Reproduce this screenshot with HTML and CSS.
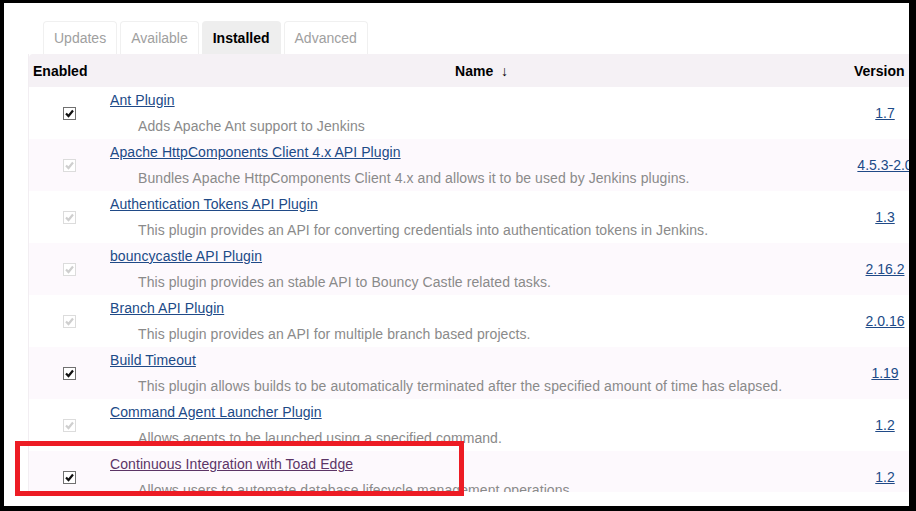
FILE: index.html
```html
<!DOCTYPE html>
<html lang="en">
<head>
    <meta charset="UTF-8">
    <title>Plugin Manager</title>
    <link rel="stylesheet" href="styles.css">
</head>
<body>

<div class="window">
    <div class="viewport">

        <!-- Onglets du gestionnaire -->
        <div class="tabs">
            <div class="tab">Updates</div>
            <div class="tab">Available</div>
            <div class="tab active">Installed</div>
            <div class="tab">Advanced</div>
        </div>

        <!-- Liste des plugins installés -->
        <table class="plugins">
            <colgroup>
                <col class="col-enabled">
                <col class="col-name">
                <col class="col-version">
            </colgroup>
            <thead>
                <tr>
                    <th class="th-enabled">Enabled</th>
                    <th class="th-name">Name&nbsp;&nbsp;↓</th>
                    <th class="th-version">Version</th>
                </tr>
            </thead>
            <tbody>
                <tr>
                    <td class="cell-check"><span class="check"><svg viewBox="0 0 11 11"><path d="M2 5.5 L4.5 8 L9 2.5"/></svg></span></td>
                    <td class="cell-name"><div class="title"><a href="#">Ant Plugin</a></div><div class="desc">Adds Apache Ant support to Jenkins</div></td>
                    <td class="cell-version"><a href="#">1.7</a></td>
                </tr>
                <tr>
                    <td class="cell-check"><span class="check off"><svg viewBox="0 0 11 11"><path d="M2 5.5 L4.5 8 L9 2.5"/></svg></span></td>
                    <td class="cell-name"><div class="title"><a href="#">Apache HttpComponents Client 4.x API Plugin</a></div><div class="desc">Bundles Apache HttpComponents Client 4.x and allows it to be used by Jenkins plugins.</div></td>
                    <td class="cell-version"><a href="#">4.5.3-2.0</a></td>
                </tr>
                <tr>
                    <td class="cell-check"><span class="check off"><svg viewBox="0 0 11 11"><path d="M2 5.5 L4.5 8 L9 2.5"/></svg></span></td>
                    <td class="cell-name"><div class="title"><a href="#">Authentication Tokens API Plugin</a></div><div class="desc">This plugin provides an API for converting credentials into authentication tokens in Jenkins.</div></td>
                    <td class="cell-version"><a href="#">1.3</a></td>
                </tr>
                <tr>
                    <td class="cell-check"><span class="check off"><svg viewBox="0 0 11 11"><path d="M2 5.5 L4.5 8 L9 2.5"/></svg></span></td>
                    <td class="cell-name"><div class="title"><a href="#">bouncycastle API Plugin</a></div><div class="desc">This plugin provides an stable API to Bouncy Castle related tasks.</div></td>
                    <td class="cell-version"><a href="#">2.16.2</a></td>
                </tr>
                <tr>
                    <td class="cell-check"><span class="check off"><svg viewBox="0 0 11 11"><path d="M2 5.5 L4.5 8 L9 2.5"/></svg></span></td>
                    <td class="cell-name"><div class="title"><a href="#">Branch API Plugin</a></div><div class="desc">This plugin provides an API for multiple branch based projects.</div></td>
                    <td class="cell-version"><a href="#">2.0.16</a></td>
                </tr>
                <tr>
                    <td class="cell-check"><span class="check"><svg viewBox="0 0 11 11"><path d="M2 5.5 L4.5 8 L9 2.5"/></svg></span></td>
                    <td class="cell-name"><div class="title"><a href="#">Build Timeout</a></div><div class="desc">This plugin allows builds to be automatically terminated after the specified amount of time has elapsed.</div></td>
                    <td class="cell-version"><a href="#">1.19</a></td>
                </tr>
                <tr>
                    <td class="cell-check"><span class="check off"><svg viewBox="0 0 11 11"><path d="M2 5.5 L4.5 8 L9 2.5"/></svg></span></td>
                    <td class="cell-name"><div class="title"><a href="#">Command Agent Launcher Plugin</a></div><div class="desc">Allows agents to be launched using a specified command.</div></td>
                    <td class="cell-version"><a href="#">1.2</a></td>
                </tr>
                <tr>
                    <td class="cell-check"><span class="check"><svg viewBox="0 0 11 11"><path d="M2 5.5 L4.5 8 L9 2.5"/></svg></span></td>
                    <td class="cell-name"><div class="title"><a href="#" class="visited">Continuous Integration with Toad Edge</a></div><div class="desc">Allows users to automate database lifecycle management operations.</div></td>
                    <td class="cell-version"><a href="#">1.2</a></td>
                </tr>
            </tbody>
        </table>
    </div>

    <!-- Cadre rouge de mise en évidence -->
    <div class="highlight"></div>
</div>

</body>
</html>
```

FILE: styles.css
```css
body {
    margin: 0;
    padding: 0;
    background: #000;
    font-family: "Liberation Sans", Arial, sans-serif;
    font-size: 14px;
}
/* Fenêtre blanche dans le cadre noir */
.window {
    position: relative;
    background: #fff;
    margin: 3px 7px 0 4px;
    height: 503px;
    overflow: hidden;
}
.viewport {
    height: 471px;
    overflow: hidden;
    padding: 18px 0 0 24px;
}
/* Onglets */
.tabs {
    display: flex;
    gap: 3px;
    margin-left: 15px;
}
.tab {
    height: 32px;
    line-height: 32px;
    padding: 0 10px;
    color: #a0a0a0;
    border: 1px solid #f0f0f0;
    border-bottom: none;
    border-radius: 4px 4px 0 0;
}
.tab.active {
    background: #eeeeee;
    color: #000;
    font-weight: bold;
    border-color: #eeeeee;
}
/* Tableau des plugins */
.plugins {
    width: 892px;
    table-layout: fixed;
    border-collapse: separate;
    border-spacing: 0;
    border-left: 1px solid #f2eef2;
}
.col-enabled {
    width: 80px;
}
.col-version {
    width: 70px;
}
.plugins th {
    background: #f5f1f5;
    height: 33px;
    padding: 0;
    font-weight: bold;
    color: #000;
}
.th-enabled {
    text-align: left;
    padding-left: 4px !important;
    border-top-left-radius: 4px;
}
.th-name {
    text-align: center;
    padding-left: 4px !important;
}
.th-version {
    text-align: left;
    padding-left: 4px !important;
}
.plugins td {
    padding: 0;
    vertical-align: middle;
}
.plugins tbody tr:nth-child(even) td {
    background: #fdf9fd;
}
.cell-name {
    padding: 4px 0 4px 1px !important;
}
.cell-version {
    text-align: center;
}
.title {
    line-height: 18px;
    letter-spacing: 0.08px;
}
.desc {
    line-height: 18px;
    padding-top: 8px;
    padding-left: 28px;
    color: #8a8a8a;
    white-space: nowrap;
    letter-spacing: 0.08px;
}
.plugins a {
    color: #204a87;
    text-decoration: underline;
}
.plugins a.visited {
    color: #5c3566;
}
/* Cases à cocher dessinées */
.check {
    display: block;
    width: 11px;
    height: 11px;
    border: 1px solid #707070;
    background: #fff;
    margin: 0 auto;
}
.check svg {
    display: block;
    width: 11px;
    height: 11px;
}
.check path {
    fill: none;
    stroke: #111;
    stroke-width: 2.2;
}
.check.off {
    border-color: #dcdcdc;
}
.check.off path {
    stroke: #cfcfcf;
}
/* Cadre rouge */
.highlight {
    position: absolute;
    left: 11px;
    top: 438px;
    width: 449px;
    height: 55px;
    box-sizing: border-box;
    border: 5px solid #ed1c24;
}
```
